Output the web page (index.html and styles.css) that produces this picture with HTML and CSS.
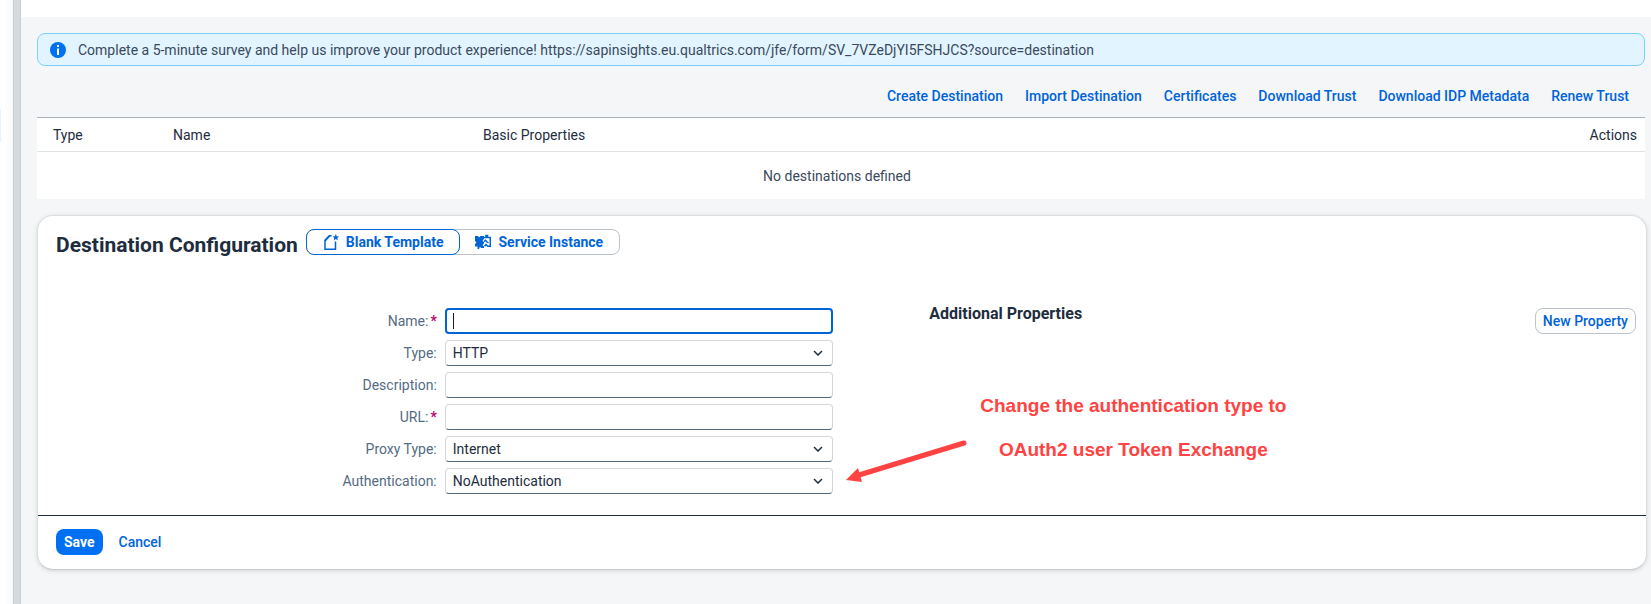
FILE: index.html
```html
<!DOCTYPE html>
<html lang="en">
<head>
<meta charset="utf-8">
<title>Destinations</title>
<link rel="stylesheet" href="styles.css">
</head>
<body class="shell">
<nav class="side" aria-label="Navigation"><span class="side-mark"></span></nav>
<div class="splitter"></div>
<main class="main">
  <header class="topbar"></header>
  <div class="content">
    <div class="banner">
      <svg class="banner-icon" viewBox="0 0 16 16" aria-hidden="true"><circle cx="8" cy="8" r="8" fill="#0070f2"/><path d="M7 3h2v2H7zM7 6.500h2V13H7z" fill="#fff"/></svg>
      <span>Complete a 5-minute survey and help us improve your product experience! https://sapinsights.eu.qualtrics.com/jfe/form/SV_7VZeDjYI5FSHJCS?source=destination</span>
    </div>
    <div class="toolbar">
      <button class="link-btn">Create Destination</button>
      <button class="link-btn">Import Destination</button>
      <button class="link-btn">Certificates</button>
      <button class="link-btn">Download Trust</button>
      <button class="link-btn">Download IDP Metadata</button>
      <button class="link-btn">Renew Trust</button>
    </div>
    <table class="table">
      <thead><tr><th class="col-type">Type</th><th class="col-name">Name</th><th>Basic Properties</th><th class="col-actions">Actions</th></tr></thead>
      <tbody><tr><td colspan="4">No destinations defined</td></tr></tbody>
    </table>
    <section class="card">
      <div class="card-head">
        <h1 class="title">Destination Configuration</h1>
        <div class="segmented">
          <button class="segment segment-on"><svg class="seg-icon" viewBox="0 0 16 16" aria-hidden="true"><path d="M8.500 1.700H6.500L2 6.500V15.200h10.500V7.500" fill="none" stroke="currentColor" stroke-width="1.500"/><path d="M7 1v1.500L3 7H1.300V6L6 1z" fill="currentColor"/><path d="M12.800 0l.9 2.200 2.300.2-1.700 1.600.5 2.400-2-1.300-2 1.300.5-2.400-1.700-1.600 2.300-.2z" fill="currentColor"/></svg>Blank Template</button>
          <button class="segment"><svg class="seg-icon" viewBox="0 0 16 16" aria-hidden="true"><path d="M0 2h3l1 1.500L5.500 2H9v3L7.500 6.500 9 8v1.500L7.500 11 9 12.500V14H6l-1-1.500L4 15H2.500v-2.500H0V10l1.500-1.500L0 7z" fill="currentColor"/><path d="M8.500 3.500H11V1.500h1.500v2h2.800v8.800h-2.500L11 10.500 9.500 12.300M9 7.500l1.500-1.200L12 8l1.500 1" fill="none" stroke="currentColor" stroke-width="1.500"/></svg>Service Instance</button>
        </div>
      </div>
      <div class="card-body">
        <form class="form">
          <label class="label required" for="name">Name:</label>
          <input class="field field-focus" id="name" type="text">
          <label class="label" for="type">Type:</label>
          <select class="field" id="type"><option>HTTP</option></select>
          <label class="label" for="description">Description:</label>
          <input class="field" id="description" type="text">
          <label class="label required" for="url">URL:</label>
          <input class="field" id="url" type="text">
          <label class="label" for="proxy">Proxy Type:</label>
          <select class="field" id="proxy"><option>Internet</option></select>
          <label class="label" for="auth">Authentication:</label>
          <select class="field" id="auth"><option>NoAuthentication</option></select>
        </form>
        <div class="extra">
          <h2 class="subtitle">Additional Properties</h2>
          <button class="outline-btn">New Property</button>
        </div>
        <svg class="arrow" viewBox="0 0 124 48" aria-hidden="true"><path d="M119 5L14 37" fill="none" stroke="#ff4242" stroke-width="5" stroke-linecap="round"/><path d="M1 42L13 30l4 14z" fill="#ff4242"/></svg>
        <p class="note">Change the authentication type to<br>OAuth2 user Token Exchange</p>
      </div>
      <footer class="card-foot">
        <button class="save-btn">Save</button>
        <button class="link-btn">Cancel</button>
      </footer>
    </section>
  </div>
</main>
</body>
</html>
```
FILE: styles.css
```css
* { box-sizing: border-box; }
.shell {
  margin: 0;
  min-height: 100vh;
  display: flex;
  background: #fff;
  color: #1d2d3e;
  font: 14px/18px Roboto, sans-serif;
}
button, input, select { font: inherit; color: inherit; margin: 0; }
.side { width: 13px; padding-top: 109px; background: linear-gradient(to right, #fff 4px, #f9f9fa); }
.side-mark { display: block; width: 1px; height: 33px; background: #e1f4ff; }
.splitter { width: 8px; background: #d5dadd; border-left: 1px solid #c8cdd3; border-right: 1px solid #c8cdd8; }
.main { flex: 1; min-width: 0; background: #f5f6f7; }
.topbar { height: 17px; background: #fff; }
.content { padding: 16px 4px 32px 16px; }
.banner {
  display: flex;
  align-items: center;
  gap: 12px;
  min-height: 33px;
  margin-right: 2px;
  padding: 4px 12px;
  border: 1px solid #7bcfff;
  border-radius: 8px;
  background: #e1f4ff;
  color: #3a4a5c;
}
.banner-icon { width: 16px; height: 16px; flex: none; }
.toolbar {
  display: flex;
  justify-content: flex-end;
  align-items: center;
  gap: 6px;
  height: 43px;
  margin: 8px 10px 0 0;
}
.link-btn { padding: 0 8px; border: 0; background: none; color: #0064d9; font-weight: 500; }
.table {
  width: calc(100% - 2px);
  border-collapse: separate;
  border-spacing: 0;
  table-layout: fixed;
  background: #fff;
  border-top: 1px solid #a8b2bd;
}
.table th { height: 34px; padding: 0 8px; text-align: left; font-weight: 400; border-bottom: 1px solid #e0e2e4; }
.table .col-type { width: 128px; padding-left: 16px; }
.table .col-name { width: 310px; }
.table .col-actions { text-align: right; }
.table td { height: 47px; padding: 0 8px 0 0; text-align: center; color: #3a4a5c; }
.card {
  margin-top: 16px;
  border: 1px solid #dcdfe2;
  border-radius: 16px;
  border-bottom-color: #c8ccd0;
  background: #fff;
  box-shadow: 0 1px 4px rgba(34, 53, 72, 0.16);
}
.card-head { display: flex; align-items: flex-start; gap: 8px; padding: 13px 18px 0; }
.title { margin: 4px 0 0; font-size: 21px; line-height: 24px; font-weight: 700; }
.segmented { display: flex; border: 1px solid #bcc3ca; border-radius: 8px; }
.segment {
  display: flex;
  align-items: center;
  gap: 7px;
  height: 26px;
  margin: -1px;
  padding: 0 16px;
  border: 1px solid transparent;
  border-radius: 8px;
  background: none;
  color: #0064d9;
  font-weight: 700;
}
.segment-on { border-color: #0064d9; background: #fff; }
.seg-icon { width: 16px; height: 16px; }
.card-body {
  position: relative;
  display: grid;
  grid-template-columns: 11fr 10fr;
  gap: 96px;
  padding: 51px 10px 21px 18px;
}
.form { display: grid; grid-template-columns: 49fr 50fr; gap: 6px 8px; align-items: center; }
.label { text-align: right; color: #556b82; }
.required::after { content: "*"; margin-left: 2px; color: #ba066c; font-weight: 700; }
.field {
  width: 100%;
  height: 26px;
  padding: 0 7px;
  border: 1px solid #d3d7db;
  border-bottom-color: #556b82;
  border-radius: 4px;
  background: #fff;
  outline: 0;
}
select.field {
  appearance: none;
  background: #fff url("data:image/svg+xml,%3Csvg xmlns='http://www.w3.org/2000/svg' width='10' height='6'%3E%3Cpath d='M1 1l4 4 4-4' fill='none' stroke='%231d2d3e' stroke-width='1.5'/%3E%3C/svg%3E") no-repeat right 9px center;
}
.field-focus {
  border: 2px solid #0064d9;
  background: linear-gradient(#131e29, #131e29) no-repeat 6px center / 1px 16px;
}
.extra { display: flex; justify-content: space-between; align-items: flex-start; }
.subtitle { margin: 0; font-size: 16px; line-height: 12px; font-weight: 700; }
.outline-btn { height: 26px; padding: 0 7px; border: 1px solid #bcc3ca; border-radius: 8px; background: #fff; color: #0064d9; font-weight: 500; }
.arrow { position: absolute; left: 50.200%; top: 181px; width: 124px; height: 48px; }
.note {
  position: absolute;
  left: 58.600%;
  top: 127px;
  margin: 0;
  color: #ff4242;
  font: bold 19px/44px "Liberation Sans", Arial, sans-serif;
  text-align: center;
  white-space: nowrap;
}
.card-foot { display: flex; align-items: center; gap: 8px; padding: 13px 18px 14px; border-top: 1px solid #1d2d3e; }
.save-btn { height: 26px; padding: 0 8px; border: 0; border-radius: 8px; background: #0070f2; color: #fff; font-weight: 700; }
```
